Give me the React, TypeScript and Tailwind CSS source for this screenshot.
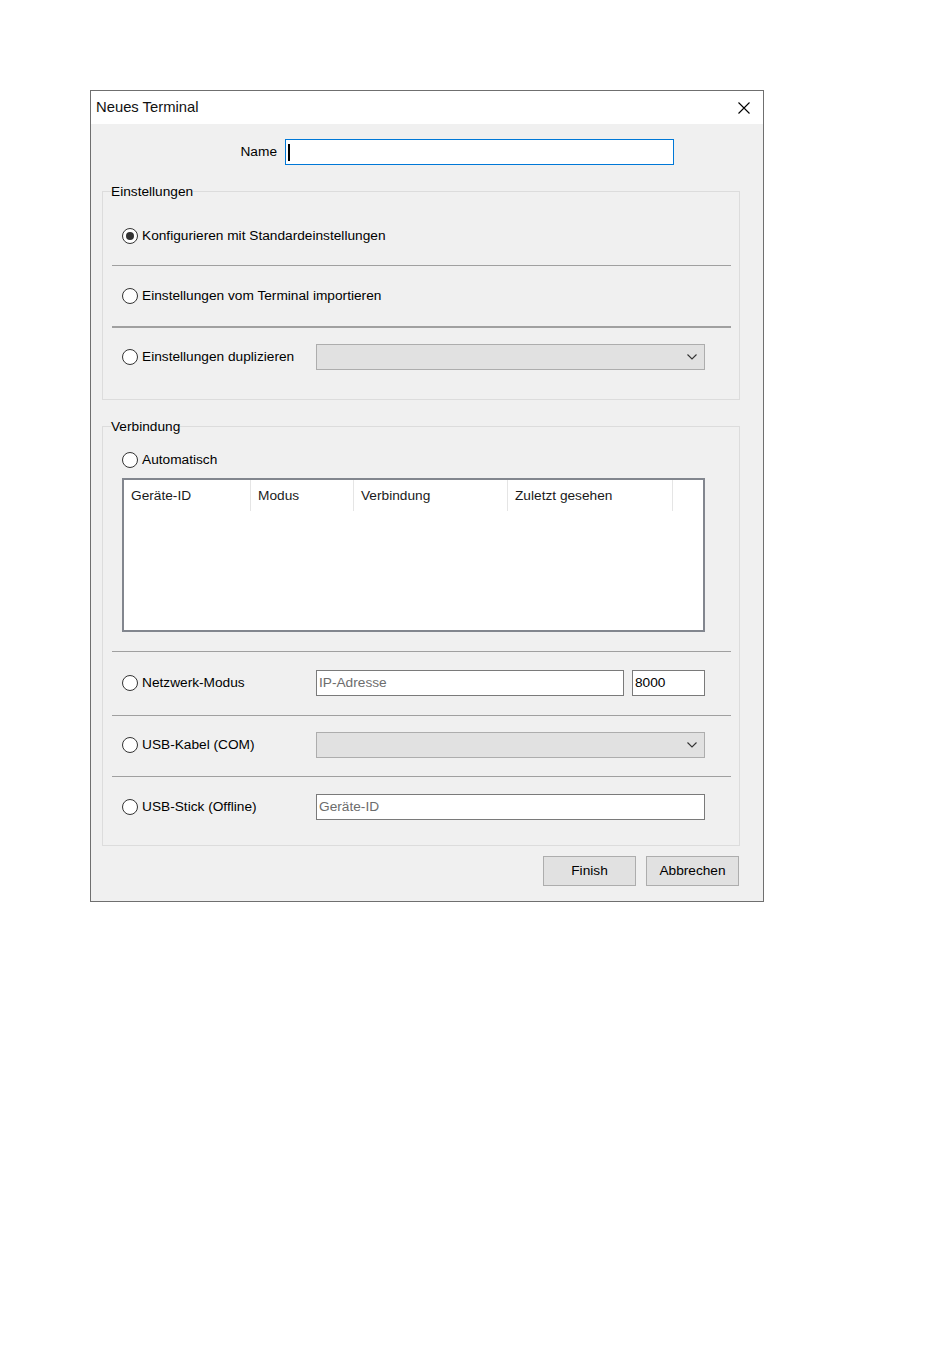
import React from 'react';

function Radio({ checked = false }: { checked?: boolean }) {
  return (
    <span className="flex h-[16px] w-[16px] shrink-0 items-center justify-center rounded-full border-[1.5px] border-[#333333] bg-white">
      {checked && <span className="h-[8px] w-[8px] rounded-full bg-[#333333]" />}
    </span>
  );
}

function RadioLabel({ text, checked = false }: { text: string; checked?: boolean }) {
  return (
    <label className="flex w-[194px] shrink-0 items-center gap-[4px]">
      <Radio checked={checked} />
      <span className="whitespace-nowrap pt-[1px]">{text}</span>
    </label>
  );
}

function Chevron() {
  return (
    <svg width="10" height="6" viewBox="0 0 10 6" className="shrink-0">
      <polyline points="0.5,0.5 5,5 9.5,0.5" fill="none" stroke="#333333" strokeWidth="1.1" />
    </svg>
  );
}

function Combo() {
  return (
    <div className="flex h-[26px] flex-1 items-center justify-end border-[1.5px] border-[#adadad] bg-[#e1e1e1] pr-[7px]">
      <Chevron />
    </div>
  );
}

function TextBox({ value, placeholder, className }: { value?: string; placeholder?: string; className?: string }) {
  return (
    <div className={`flex h-[26px] items-center border-[1.5px] border-[#7a7a7a] bg-white pl-[2px] pt-[1px] ${className ?? ''}`}>
      {value ? <span className="text-black">{value}</span> : <span className="text-[#6d6d6d]">{placeholder}</span>}
    </div>
  );
}

function Separator({ thick = false }: { thick?: boolean }) {
  return (
    <div className="pl-[9px] pr-[8px]">
      <div className={thick ? 'h-[2px] bg-[#a0a0a0]' : 'h-[1px] bg-[#a0a0a0]'} />
    </div>
  );
}

function Row({ children, className }: { children: React.ReactNode; className?: string }) {
  return <div className={`flex h-[26px] items-center pl-[19px] pr-[34px] ${className ?? ''}`}>{children}</div>;
}

function GroupBox({ title, children, className }: { title: string; children: React.ReactNode; className?: string }) {
  return (
    <div className={`relative ml-[11px] mr-[23px] border border-[#dcdcdc] ${className ?? ''}`}>
      <span className="absolute left-[8px] top-[-8px] bg-[#f0f0f0] leading-[16px]">{title}</span>
      {children}
    </div>
  );
}

const columns = [
  { label: 'Geräte-ID', w: 'w-[127px]' },
  { label: 'Modus', w: 'w-[103px]' },
  { label: 'Verbindung', w: 'w-[154px]' },
  { label: 'Zuletzt gesehen', w: 'w-[165px]' },
];

export default function App() {
  return (
    <div className="min-h-[1369px] w-[950px] bg-white pl-[90px] pt-[90px] font-['Liberation_Sans',Arial,sans-serif] text-[13.7px] text-black">
      <div className="w-[674px] border border-[#6f6f6f] bg-[#f0f0f0]">
        {/* title bar */}
        <div className="flex h-[33px] items-center justify-between bg-white pl-[5px] pr-[13px]">
          <span className="text-[14.8px] text-[#111]">Neues Terminal</span>
          <svg width="12" height="12" viewBox="0 0 12 12">
            <path d="M0.5 0.5 L11.5 11.5 M11.5 0.5 L0.5 11.5" stroke="#000" strokeWidth="1.1" />
          </svg>
        </div>

        {/* name */}
        <div className="mt-[15px] flex items-center">
          <span className="w-[186px] pt-[1px] text-right">Name</span>
          <div className="ml-[8px] flex h-[26px] w-[389px] items-center border-[1.5px] border-[#0078d7] bg-white pl-[2px]">
            <span className="h-[17px] w-[2px] bg-black" />
          </div>
        </div>

        <GroupBox title="Einstellungen" className="mt-[26px]">
          <Row className="mt-[31px]">
            <RadioLabel text="Konfigurieren mit Standardeinstellungen" checked />
          </Row>
          <div className="mt-[16px]">
            <Separator />
          </div>
          <Row className="mt-[17px]">
            <RadioLabel text="Einstellungen vom Terminal importieren" />
          </Row>
          <div className="mt-[17px]">
            <Separator thick />
          </div>
          <Row className="mb-[29px] mt-[16px]">
            <RadioLabel text="Einstellungen duplizieren" />
            <Combo />
          </Row>
        </GroupBox>

        <GroupBox title="Verbindung" className="mt-[26px]">
          <Row className="mt-[20px]">
            <RadioLabel text="Automatisch" />
          </Row>
          <div className="mt-[5px] pl-[19px] pr-[34px]">
            <div className="h-[154px] border-2 border-[#82868e] bg-white">
              <div className="flex h-[31px]">
                {columns.map((c) => (
                  <div key={c.label} className={`${c.w} flex items-center border-r border-[#e5e5e5] pl-[7px] pt-[1px] text-[#1a1a1a]`}>
                    {c.label}
                  </div>
                ))}
              </div>
            </div>
          </div>
          <div className="mt-[19px]">
            <Separator />
          </div>
          <Row className="mt-[18px]">
            <RadioLabel text="Netzwerk-Modus" />
            <TextBox placeholder="IP-Adresse" className="w-[308px]" />
            <TextBox value="8000" className="ml-[8px] flex-1" />
          </Row>
          <div className="mt-[19px]">
            <Separator />
          </div>
          <Row className="mt-[16px]">
            <RadioLabel text="USB-Kabel (COM)" />
            <Combo />
          </Row>
          <div className="mt-[18px]">
            <Separator />
          </div>
          <Row className="mb-[25px] mt-[17px]">
            <RadioLabel text="USB-Stick (Offline)" />
            <TextBox placeholder="Geräte-ID" className="flex-1" />
          </Row>
        </GroupBox>

        {/* buttons */}
        <div className="mb-[15px] mr-[24px] mt-[10px] flex justify-end gap-[10px]">
          <button className="h-[30px] w-[93px] border-[1.5px] border-[#adadad] bg-[#e1e1e1] pt-[1px]">Finish</button>
          <button className="h-[30px] w-[93px] border-[1.5px] border-[#adadad] bg-[#e1e1e1] pt-[1px]">Abbrechen</button>
        </div>
      </div>
    </div>
  );
}
